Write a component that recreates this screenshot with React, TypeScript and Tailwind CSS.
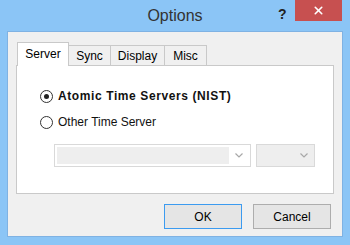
import { X } from 'lucide-react'

const font = { fontFamily: '"Liberation Sans", Arial, sans-serif' }

function Chevron() {
  return (
    <svg width="8" height="5" viewBox="0 0 8 5" className="shrink-0">
      <polyline points="0.5,0.5 4,4 7.5,0.5" fill="none" stroke="#a8a8a8" strokeWidth="1.2" />
    </svg>
  )
}

function Radio({ checked }: { checked?: boolean }) {
  return (
    <span className="w-[13px] h-[13px] rounded-full border border-[#333] bg-white flex items-center justify-center shrink-0">
      {checked && <span className="w-[5px] h-[5px] rounded-full bg-[#222]" />}
    </span>
  )
}

function Tab({ label, active, width }: { label: string; active?: boolean; width: string }) {
  if (active) {
    return (
      <div className={`${width} h-[24px] -mb-px z-10 bg-white border border-b-0 border-[#c9c9c9] flex items-center justify-center text-[12px] text-black pb-[2px]`}>
        {label}
      </div>
    )
  }
  return (
    <div className={`${width} h-[20px] -ml-px bg-[#f0f0f0] border border-b-0 border-[#c9c9c9] flex items-center justify-center text-[12px] text-black`}>
      {label}
    </div>
  )
}

export default function App() {
  return (
    <div className="w-[350px] h-[245px] bg-[#8bc5f6] flex flex-col px-[7px] pb-[8px] overflow-hidden" style={font}>
      {/* title bar */}
      <div className="h-[31px] relative flex items-center justify-center shrink-0">
        <span className="text-[16px] text-[#333]">Options</span>
        <span className="absolute left-[271px] top-[4px] text-[14px] font-bold text-[#222]">?</span>
        <div className="absolute left-[288px] top-0 w-[47px] h-[21px] bg-[#c75050] flex items-center justify-center">
          <X size={13} strokeWidth={3} color="#fff" />
        </div>
      </div>

      {/* client */}
      <div className="flex-1 border border-[#7fb2e3] bg-[#f0f0f0] flex flex-col px-[8px] pt-[10px]">
        <div className="flex items-end h-[23px] pl-[1px]">
          <Tab label="Server" width="w-[52px]" active />
          <Tab label="Sync" width="w-[43px]" />
          <Tab label="Display" width="w-[55px]" />
          <Tab label="Misc" width="w-[43px]" />
        </div>

        <div className="h-[129px] bg-white border border-[#c9c9c9] flex flex-col pl-[23px] pt-[22px]">
          <div className="flex items-center gap-[5px] h-[16px]">
            <Radio checked />
            <span className="text-[12px] font-bold tracking-[0.6px] text-[#111]">Atomic Time Servers (NIST)</span>
          </div>
          <div className="flex items-center gap-[5px] h-[16px] mt-[10px]">
            <Radio />
            <span className="text-[12px] text-[#111]">Other Time Server</span>
          </div>
          <div className="flex gap-[5px] mt-[14px] ml-[14px]">
            <div className="w-[197px] h-[23px] border border-[#d9d9d9] bg-white flex items-center p-[2px]">
              <div className="w-[172px] h-full bg-[#eeeeee]" />
              <div className="flex-1 flex justify-center">
                <Chevron />
              </div>
            </div>
            <div className="w-[59px] h-[23px] border border-[#d9d9d9] bg-[#eeeeee] flex items-center justify-end pr-[6px]">
              <Chevron />
            </div>
          </div>
        </div>

        <div className="flex justify-end gap-[11px] mt-[10px] mr-[3px]">
          <button className="w-[78px] h-[25px] border border-[#3c9bf0] bg-[#e5e5e5] text-[12px] text-black">OK</button>
          <button className="w-[78px] h-[25px] border border-[#adadad] bg-[#e5e5e5] text-[12px] text-black">Cancel</button>
        </div>
      </div>
    </div>
  )
}
